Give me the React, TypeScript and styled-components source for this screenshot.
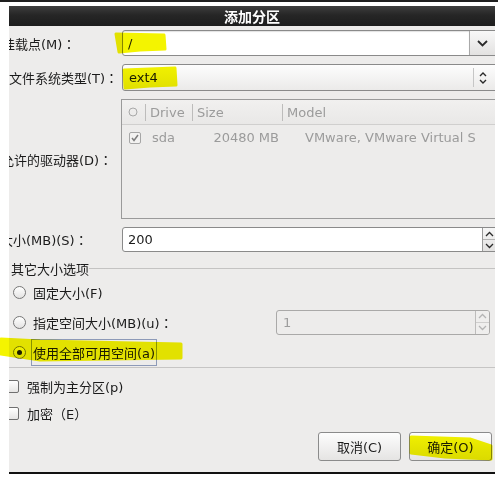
import React from "react"
import styled, { createGlobalStyle } from "styled-components"

// Global reset: white page, GTK-ish font stack
const GlobalStyle = createGlobalStyle`
  html, body {
    margin: 0;
    padding: 0;
    background: #fff;
  }
  body {
    font-family: "DejaVu Sans", "Noto Sans CJK SC", sans-serif;
    font-size: 13px;
    color: #1b1b1b;
  }
  * { box-sizing: border-box; }
`

const Page = styled.div`
  position: relative;
  width: 498px;
  height: 477px;
  overflow: hidden;
  background: #fff;
`

const TopEdge = styled.div`
  height: 6px;
  border-top: 2px solid #1f1f1f;
`

const Dialog = styled.div`
  margin-left: 9px;
  width: 486px;
  background: #edeceb;
  overflow: hidden;
  border-bottom: 2px solid #111;
  padding-bottom: 11px;
`

const TitleBar = styled.div`
  height: 20px;
  display: flex;
  align-items: center;
  justify-content: center;
  background: linear-gradient(#3e3e3e, #262626 45%, #1d1d1d);
  color: #fff;
  font-weight: bold;
  font-size: 14px;
`

const Form = styled.div`
  display: grid;
  grid-template-columns: 113px 1fr;
  grid-template-rows: 26px 27px 120px 25px;
  row-gap: 8px;
  align-items: center;
  margin-top: 4px;
  margin-right: -4px;
`

const Label = styled.div<{ $shift: number }>`
  margin-left: ${(p) => p.$shift}px;
  white-space: nowrap;
`

// full-width colon drawn centred, like the GTK CJK font does
const Colon = styled.span`
  font-family: "Noto Sans CJK TC", sans-serif;
`

const ComboEntry = styled.div`
  display: flex;
  height: 26px;
  border: 1px solid #8a8a8a;
  border-radius: 3px;
  background: #fff;
  overflow: hidden;
`

const EntryText = styled.div`
  flex: 1;
  display: flex;
  align-items: center;
  padding-left: 5px;
  box-shadow: inset 0 1px 1px rgba(0, 0, 0, 0.12);
`

const ArrowButton = styled.div`
  width: 29px;
  display: flex;
  align-items: center;
  padding-left: 7px;
  border-left: 1px solid #a9a9a9;
  background: linear-gradient(#f8f8f8, #e3e2e1);
`

const ComboButton = styled.div`
  display: flex;
  align-items: center;
  height: 27px;
  border: 1px solid #8a8a8a;
  border-radius: 3px;
  background: linear-gradient(#fdfdfd, #ebeae9);
`

const ComboValue = styled.div`
  flex: 1;
  padding-left: 6px;
`

const ComboArrows = styled.div`
  height: 19px;
  width: 25px;
  display: flex;
  align-items: center;
  padding-left: 5px;
  border-left: 1px solid #c6c6c6;
`

const DriveTable = styled.div`
  height: 120px;
  margin-left: -1px;
  border: 1px solid #9a9a9a;
  background: #edeceb;
`

const TableRow = styled.div<{ $head?: boolean }>`
  display: grid;
  grid-template-columns: 23px 47px 90px 1fr;
  align-items: center;
  height: 25px;
  color: #9b9b9b;
  white-space: nowrap;
  border-bottom: ${(p) => (p.$head ? "1px solid #d0cfce" : "none")};
  background: ${(p) => (p.$head ? "linear-gradient(#f1f0ef, #e9e8e7)" : "transparent")};
`

const HeadCell = styled.div<{ $sep?: boolean }>`
  height: 17px;
  line-height: 17px;
  padding-left: ${(p) => (p.$sep ? 4 : 6)}px;
  border-left: ${(p) => (p.$sep ? "1px solid #bdbcbb" : "none")};
  display: flex;
  align-items: center;
`

const Cell = styled.div<{ $pad?: number; $right?: boolean }>`
  padding-left: ${(p) => p.$pad ?? 0}px;
  padding-right: ${(p) => (p.$right ? 3 : 0)}px;
  overflow: hidden;
  display: flex;
  justify-content: ${(p) => (p.$right ? "flex-end" : "flex-start")};
`

const SpinBox = styled.div<{ $disabled?: boolean }>`
  display: flex;
  height: 25px;
  border: 1px solid ${(p) => (p.$disabled ? "#aaa9a8" : "#8a8a8a")};
  border-radius: 3px;
  background: ${(p) => (p.$disabled ? "#edeceb" : "#fff")};
  color: ${(p) => (p.$disabled ? "#9d9d9d" : "#1b1b1b")};
  overflow: hidden;
`

const SpinText = styled.div<{ $pad: number }>`
  flex: 1;
  display: flex;
  align-items: center;
  padding-left: ${(p) => p.$pad}px;
`

const SpinButtons = styled.div<{ $w: number; $disabled?: boolean }>`
  width: ${(p) => p.$w}px;
  display: flex;
  flex-direction: column;
  border-left: 1px solid ${(p) => (p.$disabled ? "#bdbcbb" : "#9a9a9a")};
  background: ${(p) => (p.$disabled ? "#efeeed" : "linear-gradient(#f6f6f6, #e2e1e0)")};
`

const SpinHalf = styled.div<{ $top?: boolean; $disabled?: boolean }>`
  flex: 1;
  display: flex;
  align-items: center;
  padding-left: 2px;
  border-bottom: ${(p) => (p.$top ? `1px solid ${p.$disabled ? "#cfcecd" : "#b3b3b3"}` : "none")};
`

const GroupHeader = styled.div`
  display: flex;
  align-items: center;
  height: 16px;
  margin-top: 8px;
  padding-left: 2px;
  white-space: nowrap;

  &::after {
    content: "";
    flex: 1;
    border-top: 1px solid #c4c3c2;
  }
`

const RadioGroup = styled.div`
  margin-top: 1px;
`

const RadioRow = styled.div`
  display: flex;
  align-items: center;
  height: 30px;
  padding-left: 4px;
  padding-right: 5px;
`

const RadioCircle = styled.div<{ $checked?: boolean }>`
  width: 13px;
  height: 13px;
  flex: none;
  border-radius: 50%;
  border: 1px solid #777;
  background: linear-gradient(#ffffff, #e4e3e2);
  display: flex;
  align-items: center;
  justify-content: center;

  &::after {
    content: "";
    display: ${(p) => (p.$checked ? "block" : "none")};
    width: 5px;
    height: 5px;
    border-radius: 50%;
    background: #1e1e1e;
  }
`

const OptionText = styled.div<{ $focus?: boolean }>`
  margin-left: 5px;
  padding: 3px 1px;
  border: 1px solid ${(p) => (p.$focus ? "#8d9ab8" : "transparent")};
  white-space: nowrap;
`

const SideSpin = styled.div`
  margin-left: auto;
  width: 214px;
`

const Separator = styled.div`
  height: 1px;
  background: #c6c5c4;
`

const CheckGroup = styled.div`
  margin-top: 5px;
`

const CheckRow = styled.div`
  display: flex;
  align-items: center;
  height: 27px;
  margin-left: -3px;
`

const CheckBox = styled.div`
  width: 13px;
  height: 13px;
  flex: none;
  border: 1px solid #707070;
  border-radius: 2px;
  background: linear-gradient(#ffffff, #e6e5e4);
  margin-right: 8px;
`

const ButtonRow = styled.div`
  display: flex;
  justify-content: flex-end;
  gap: 8px;
  margin-top: 5px;
  padding-right: 3px;
`

const Button = styled.div`
  width: 83px;
  height: 29px;
  display: flex;
  align-items: center;
  justify-content: center;
  border: 1px solid #8b8b8b;
  border-radius: 3px;
  background: linear-gradient(#fdfdfd, #e5e4e3);
`

// highlighter marks drawn over the screenshot
const MarkerLayer = styled.svg`
  position: absolute;
  left: 0;
  top: 0;
  pointer-events: none;
  mix-blend-mode: multiply;
`

const ChevronDown = () => (
  <svg width="11" height="7" viewBox="0 0 11 7">
    <path d="M1 1 L5.5 5.5 L10 1" fill="none" stroke="#2a2a2a" strokeWidth="1.8" />
  </svg>
)

const UpDown = () => (
  <svg width="8" height="14" viewBox="0 0 8 14">
    <path d="M1 5 L4 2 L7 5 M1 9 L4 12 L7 9" fill="none" stroke="#2a2a2a" strokeWidth="1.4" />
  </svg>
)

const SpinArrow = ({ up, color }: { up?: boolean; color: string }) => (
  <svg width="9" height="6" viewBox="0 0 9 6">
    <path d={up ? "M1 5 L4.5 1.5 L8 5" : "M1 1 L4.5 4.5 L8 1"} fill="none" stroke={color} strokeWidth="1.3" />
  </svg>
)

const RingIcon = () => (
  <svg width="10" height="10" viewBox="0 0 10 10">
    <circle cx="5" cy="5" r="4" fill="none" stroke="#a8a8a8" strokeWidth="1" />
  </svg>
)

const GreyCheck = () => (
  <svg width="12" height="12" viewBox="0 0 12 12">
    <rect x="0.5" y="0.5" width="11" height="11" rx="1.5" fill="#f3f2f1" stroke="#a6a6a6" />
    <path d="M3 6 L5 8.5 L9 3" fill="none" stroke="#7d7d7d" strokeWidth="1.5" />
  </svg>
)

export default function App() {
  return (
    <Page>
      <GlobalStyle />
      <TopEdge />
      <Dialog>
        <TitleBar>添加分区</TitleBar>

        <Form>
          <Label $shift={-7}>
            挂载点(M)<Colon>：</Colon>
          </Label>
          <ComboEntry>
            <EntryText>/</EntryText>
            <ArrowButton>
              <ChevronDown />
            </ArrowButton>
          </ComboEntry>

          <Label $shift={0}>
            文件系统类型(T)<Colon>：</Colon>
          </Label>
          <ComboButton>
            <ComboValue>ext4</ComboValue>
            <ComboArrows>
              <UpDown />
            </ComboArrows>
          </ComboButton>

          <Label $shift={-8}>
            允许的驱动器(D)<Colon>：</Colon>
          </Label>
          <DriveTable>
            <TableRow $head>
              <HeadCell>
                <RingIcon />
              </HeadCell>
              <HeadCell $sep>Drive</HeadCell>
              <HeadCell $sep>Size</HeadCell>
              <HeadCell $sep>Model</HeadCell>
            </TableRow>
            <TableRow>
              <Cell $pad={7}>
                <GreyCheck />
              </Cell>
              <Cell $pad={7}>sda</Cell>
              <Cell $right>20480 MB</Cell>
              <Cell $pad={23}>VMware, VMware Virtual S</Cell>
            </TableRow>
          </DriveTable>

          <Label $shift={-9}>
            大小(MB)(S)<Colon>：</Colon>
          </Label>
          <SpinBox>
            <SpinText $pad={5}>200</SpinText>
            <SpinButtons $w={16}>
              <SpinHalf $top>
                <SpinArrow up color="#2a2a2a" />
              </SpinHalf>
              <SpinHalf>
                <SpinArrow color="#2a2a2a" />
              </SpinHalf>
            </SpinButtons>
          </SpinBox>
        </Form>

        <GroupHeader>其它大小选项</GroupHeader>
        <RadioGroup>
          <RadioRow>
            <RadioCircle />
            <OptionText>固定大小(F)</OptionText>
          </RadioRow>
          <RadioRow>
            <RadioCircle />
            <OptionText>
              指定空间大小(MB)(u)<Colon>：</Colon>
            </OptionText>
            <SideSpin>
              <SpinBox $disabled>
                <SpinText $pad={6}>1</SpinText>
                <SpinButtons $w={14} $disabled>
                  <SpinHalf $top $disabled>
                    <SpinArrow up color="#b4b4b4" />
                  </SpinHalf>
                  <SpinHalf $disabled>
                    <SpinArrow color="#b4b4b4" />
                  </SpinHalf>
                </SpinButtons>
              </SpinBox>
            </SideSpin>
          </RadioRow>
          <RadioRow>
            <RadioCircle $checked />
            <OptionText $focus>使用全部可用空间(a)</OptionText>
          </RadioRow>
        </RadioGroup>
        <Separator />

        <CheckGroup>
          <CheckRow>
            <CheckBox />
            强制为主分区(p)
          </CheckRow>
          <CheckRow>
            <CheckBox />
            加密（E）
          </CheckRow>
        </CheckGroup>

        <ButtonRow>
          <Button>取消(C)</Button>
          <Button>确定(O)</Button>
        </ButtonRow>
      </Dialog>

      <MarkerLayer width="498" height="477" viewBox="0 0 498 477">
        <g fill="#f4f400" stroke="#f4f400" strokeWidth="3" strokeLinejoin="round">
          <path d="M116 34 L164 35 L165 49 L140 50 L119 52 Z" />
          <path d="M124 70 L175 68 L176 85 L150 86 L125 88 Z" />
          <path d="M1 339 L40 341 L181 344 L181 358 L40 360 L1 354 Z" />
          <path d="M411 437 L470 439 L491 446 L491 459 L445 457 L411 453 Z" />
        </g>
      </MarkerLayer>
    </Page>
  )
}
